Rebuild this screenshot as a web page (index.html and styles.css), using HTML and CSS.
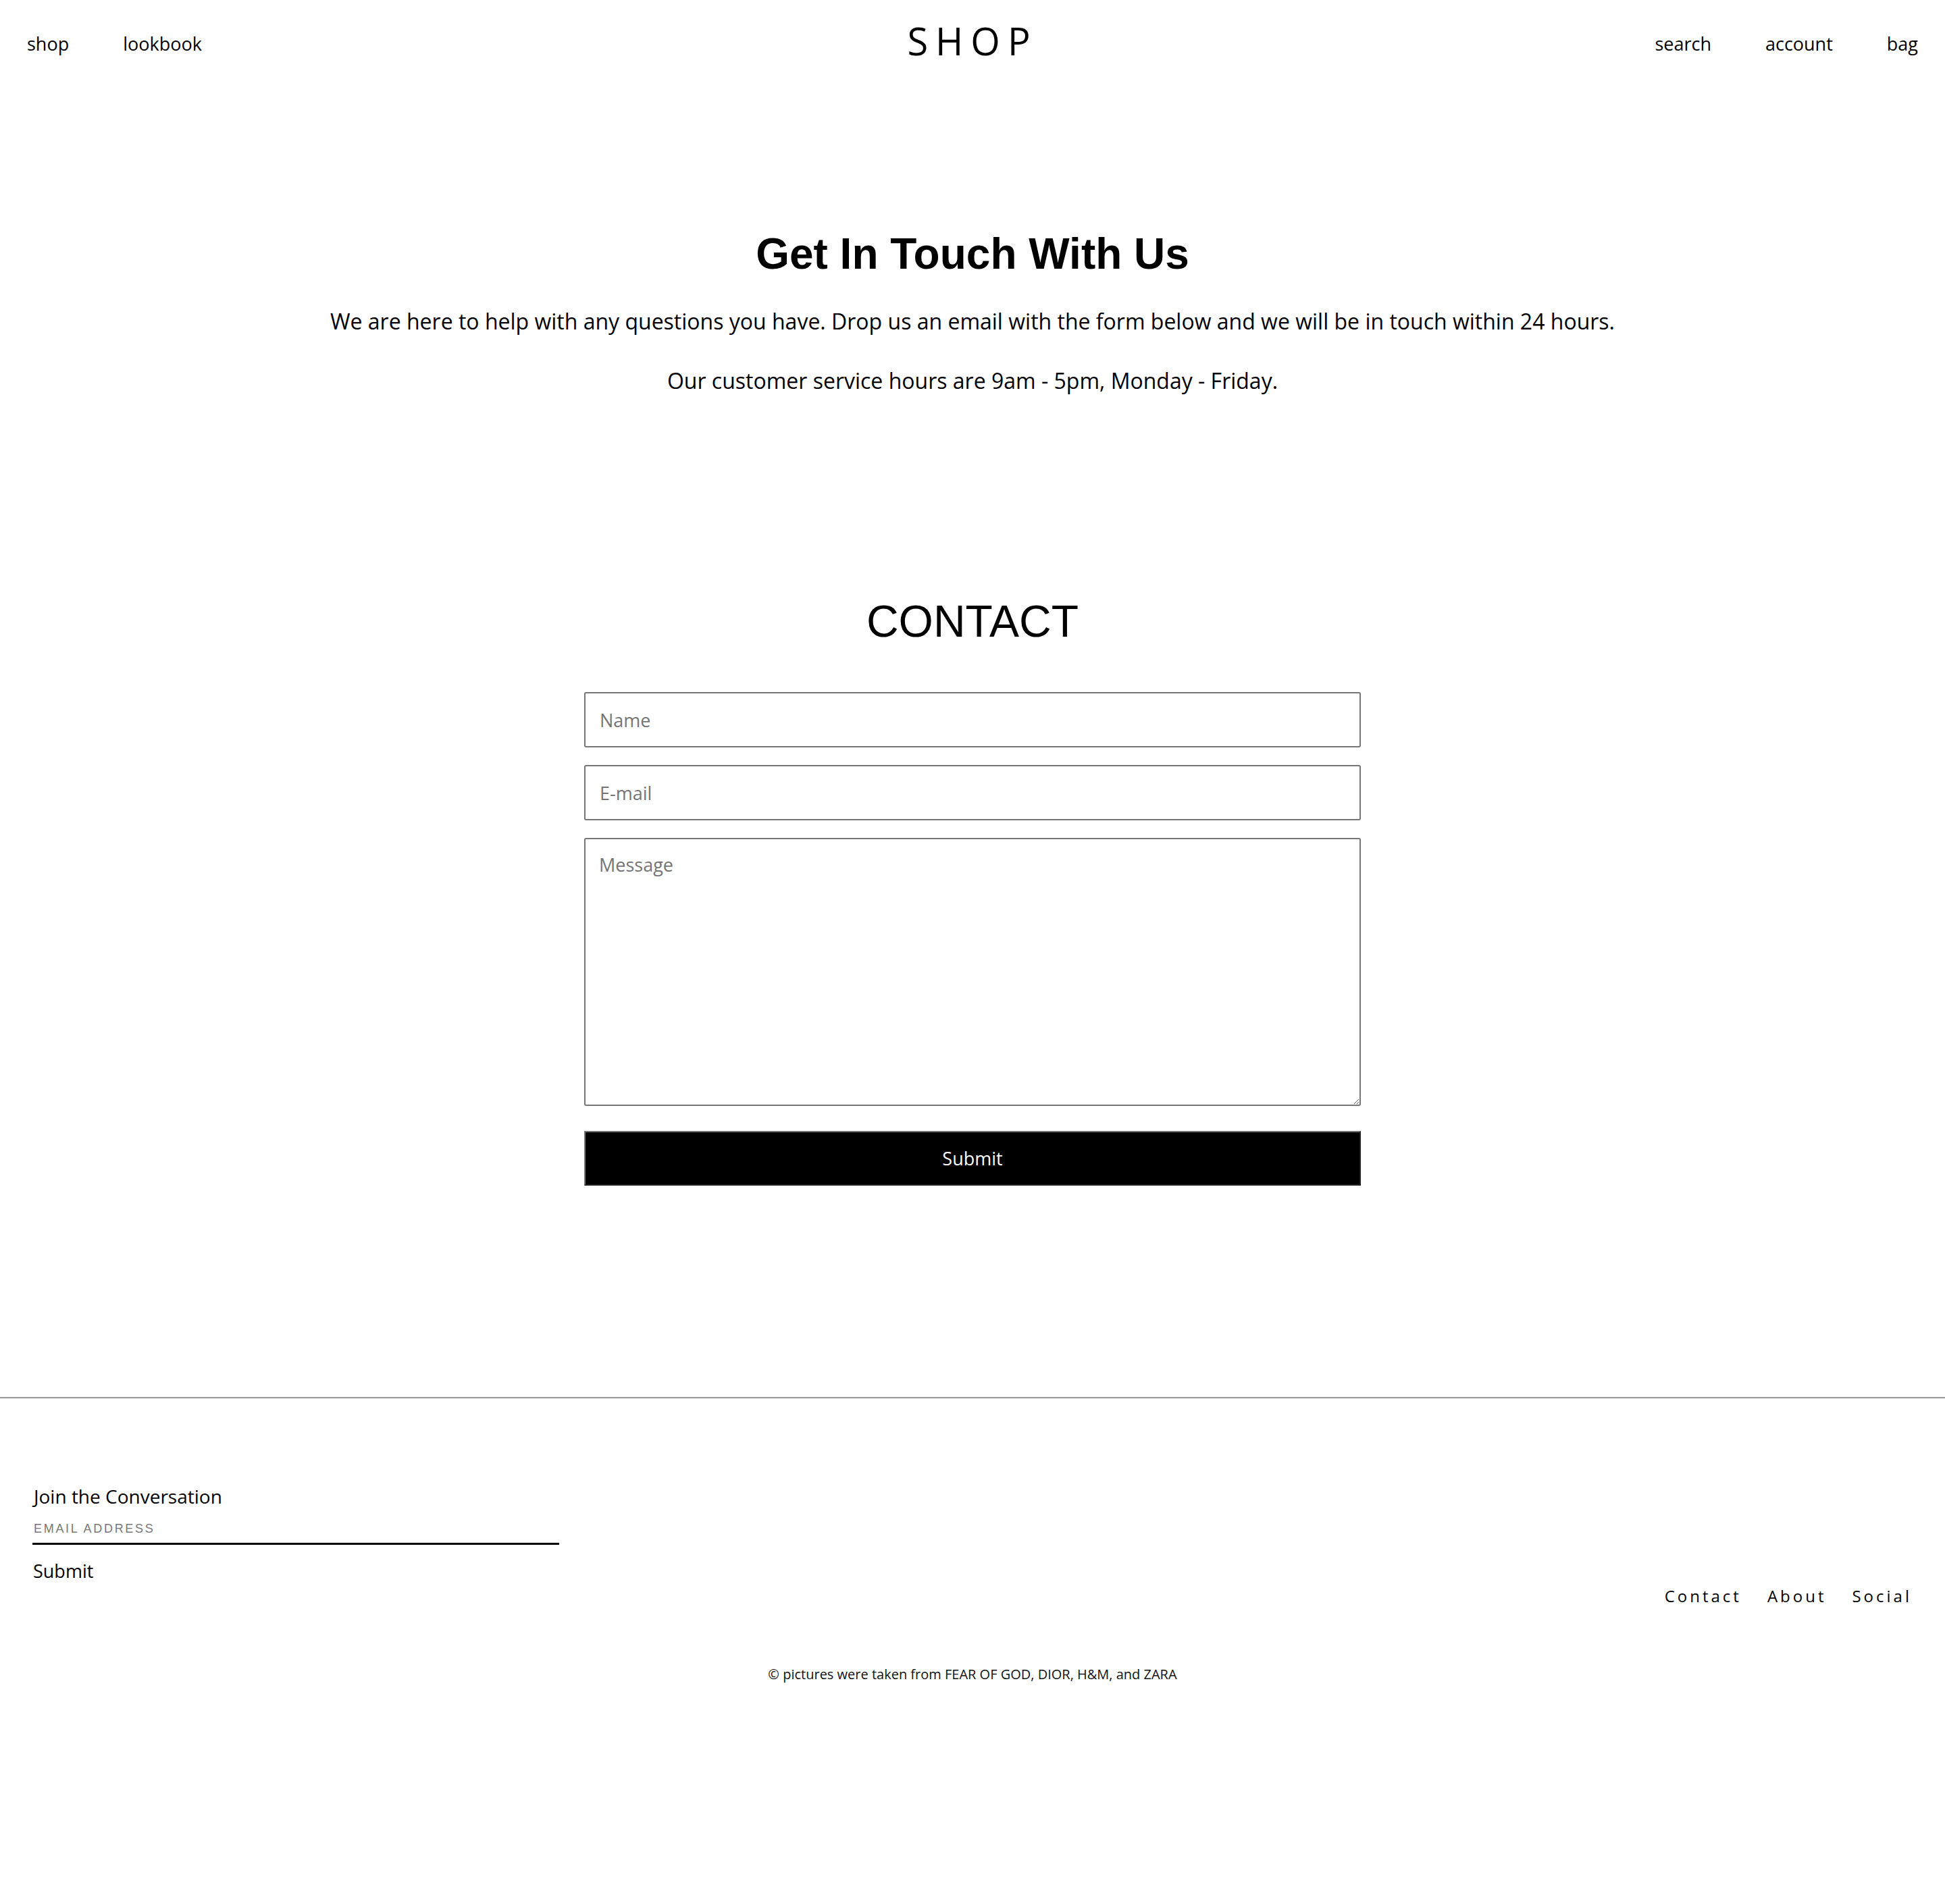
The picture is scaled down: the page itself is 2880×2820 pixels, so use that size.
FILE: index.html
```html
<!DOCTYPE html>
<html lang="en">
<head>
<meta charset="utf-8">
<title>Contact - SHOP</title>
<link rel="stylesheet" href="styles.css">
</head>
<body>
<header class="site-header">
  <nav class="nav nav-left">
    <a href="#" class="nav-link">shop</a>
    <a href="#" class="nav-link">lookbook</a>
  </nav>
  <div class="logo">SHOP</div>
  <nav class="nav nav-right">
    <a href="#" class="nav-link">search</a>
    <a href="#" class="nav-link">account</a>
    <a href="#" class="nav-link">bag</a>
  </nav>
</header>

<main class="page">
  <section class="intro">
    <h1 class="intro-title">Get In Touch With Us</h1>
    <p class="intro-text">We are here to help with any questions you have. Drop us an email with the form below and we will be in touch within 24 hours.</p>
    <p class="intro-text intro-hours">Our customer service hours are 9am - 5pm, Monday - Friday.</p>
  </section>

  <section class="contact">
    <h2 class="contact-title">CONTACT</h2>
    <form class="contact-form">
      <input class="field" type="text" placeholder="Name">
      <input class="field" type="email" placeholder="E-mail">
      <textarea class="field field-message" placeholder="Message"></textarea>
      <button class="submit" type="button">Submit</button>
    </form>
  </section>
</main>

<footer class="site-footer">
  <hr class="footer-rule">
  <div class="footer-row">
    <div class="newsletter">
      <p class="newsletter-title">Join the Conversation</p>
      <input class="newsletter-input" type="email" placeholder="EMAIL ADDRESS">
      <button class="newsletter-submit" type="button">Submit</button>
    </div>
    <ul class="footer-links">
      <li><a href="#" class="footer-link">Contact</a></li>
      <li><a href="#" class="footer-link">About</a></li>
      <li><a href="#" class="footer-link">Social</a></li>
    </ul>
  </div>
  <p class="copyright">© pictures were taken from FEAR OF GOD, DIOR, H&amp;M, and ZARA</p>
</footer>
</body>
</html>
```

FILE: styles.css
```css
* {
  box-sizing: border-box;
}

html, body {
  margin: 0;
  padding: 0;
  background: #fff;
}

body {
  font-family: "Open Sans", "Noto Sans", sans-serif;
  color: #000;
}

a {
  color: inherit;
  text-decoration: none;
}

/* Header */
.site-header {
  display: grid;
  grid-template-columns: 1fr auto 1fr;
  align-items: center;
  height: 124px;
}

.nav {
  display: flex;
  align-items: center;
  padding-top: 4px;
}

.nav-right {
  justify-content: flex-end;
}

.nav-link {
  font-size: 27px;
  padding: 0 40px;
  color: #000;
}

.logo {
  font-size: 56px;
  letter-spacing: 11px;
  margin-bottom: 4px;
  color: #000;
}

/* Intro */
.intro {
  padding-top: 215px;
  text-align: center;
}

.intro-title {
  font-family: "Liberation Sans", Arial, sans-serif;
  font-weight: bold;
  font-size: 64px;
  line-height: normal;
  margin: 0;
}

.intro-text {
  font-size: 32px;
  margin: 41px 0 0;
}

.intro-hours {
  margin-top: 45px;
}

/* Contact */
.contact {
  padding-top: 297px;
}

.contact-title {
  font-family: "Liberation Sans", Arial, sans-serif;
  font-weight: normal;
  font-size: 66px;
  line-height: normal;
  text-align: center;
  margin: 0;
}

.contact-form {
  width: 1150px;
  margin: 67px auto 0;
  display: flex;
  flex-direction: column;
}

.field {
  display: block;
  width: 100%;
  height: 82px;
  margin: 0 0 26px;
  padding: 0 21px;
  border: 2px solid #767676;
  border-radius: 3px;
  font-family: "Open Sans", "Noto Sans", sans-serif;
  font-size: 27px;
  color: #000;
  background: #fff;
}

.field::placeholder {
  color: #757575;
}

.field-message {
  height: 397px;
  margin-bottom: 37px;
  padding: 19px 20px;
  resize: vertical;
}

.submit {
  display: block;
  width: 100%;
  height: 81px;
  background: #000;
  color: #fff;
  font-family: "Open Sans", "Noto Sans", sans-serif;
  font-size: 27px;
  border-width: 2px;
  border-style: solid;
  border-color: #767676 #1f1f1f #1f1f1f #767676;
  cursor: pointer;
}

/* Footer */
.site-footer {
  margin-top: 313px;
}

.footer-rule {
  margin: 0;
  height: 0;
  border: 0;
  border-top: 2px solid #9a9a9a;
  border-bottom: 1px solid #eeeeee;
}

.footer-row {
  display: flex;
  justify-content: space-between;
  align-items: flex-end;
  padding: 0 49px 0 48px;
  margin-top: 125px;
}

.newsletter {
  width: 780px;
  margin-bottom: 35px;
}

.newsletter-title {
  font-size: 28px;
  margin: 0;
  padding-left: 2px;
}

.newsletter-input {
  display: block;
  width: 780px;
  height: 53px;
  padding: 8px 0 0 2px;
  border: 0;
  border-bottom: 3px solid #000;
  font-family: "Liberation Sans", Arial, sans-serif;
  font-size: 18px;
  letter-spacing: 2.7px;
  background: transparent;
}

.newsletter-input::placeholder {
  color: #777;
}

.newsletter-submit {
  display: block;
  margin-top: 20px;
  padding: 0 0 0 1px;
  border: 0;
  background: none;
  font-family: "Open Sans", "Noto Sans", sans-serif;
  font-size: 27px;
  color: #000;
}

.footer-links {
  display: flex;
  gap: 38px;
  list-style: none;
  margin: 0;
  padding: 0;
}

.footer-link {
  font-size: 24px;
  letter-spacing: 4px;
  color: #000;
}

.copyright {
  text-align: center;
  font-size: 20px;
  margin: 86px 0 0;
  color: #111;
}
```
